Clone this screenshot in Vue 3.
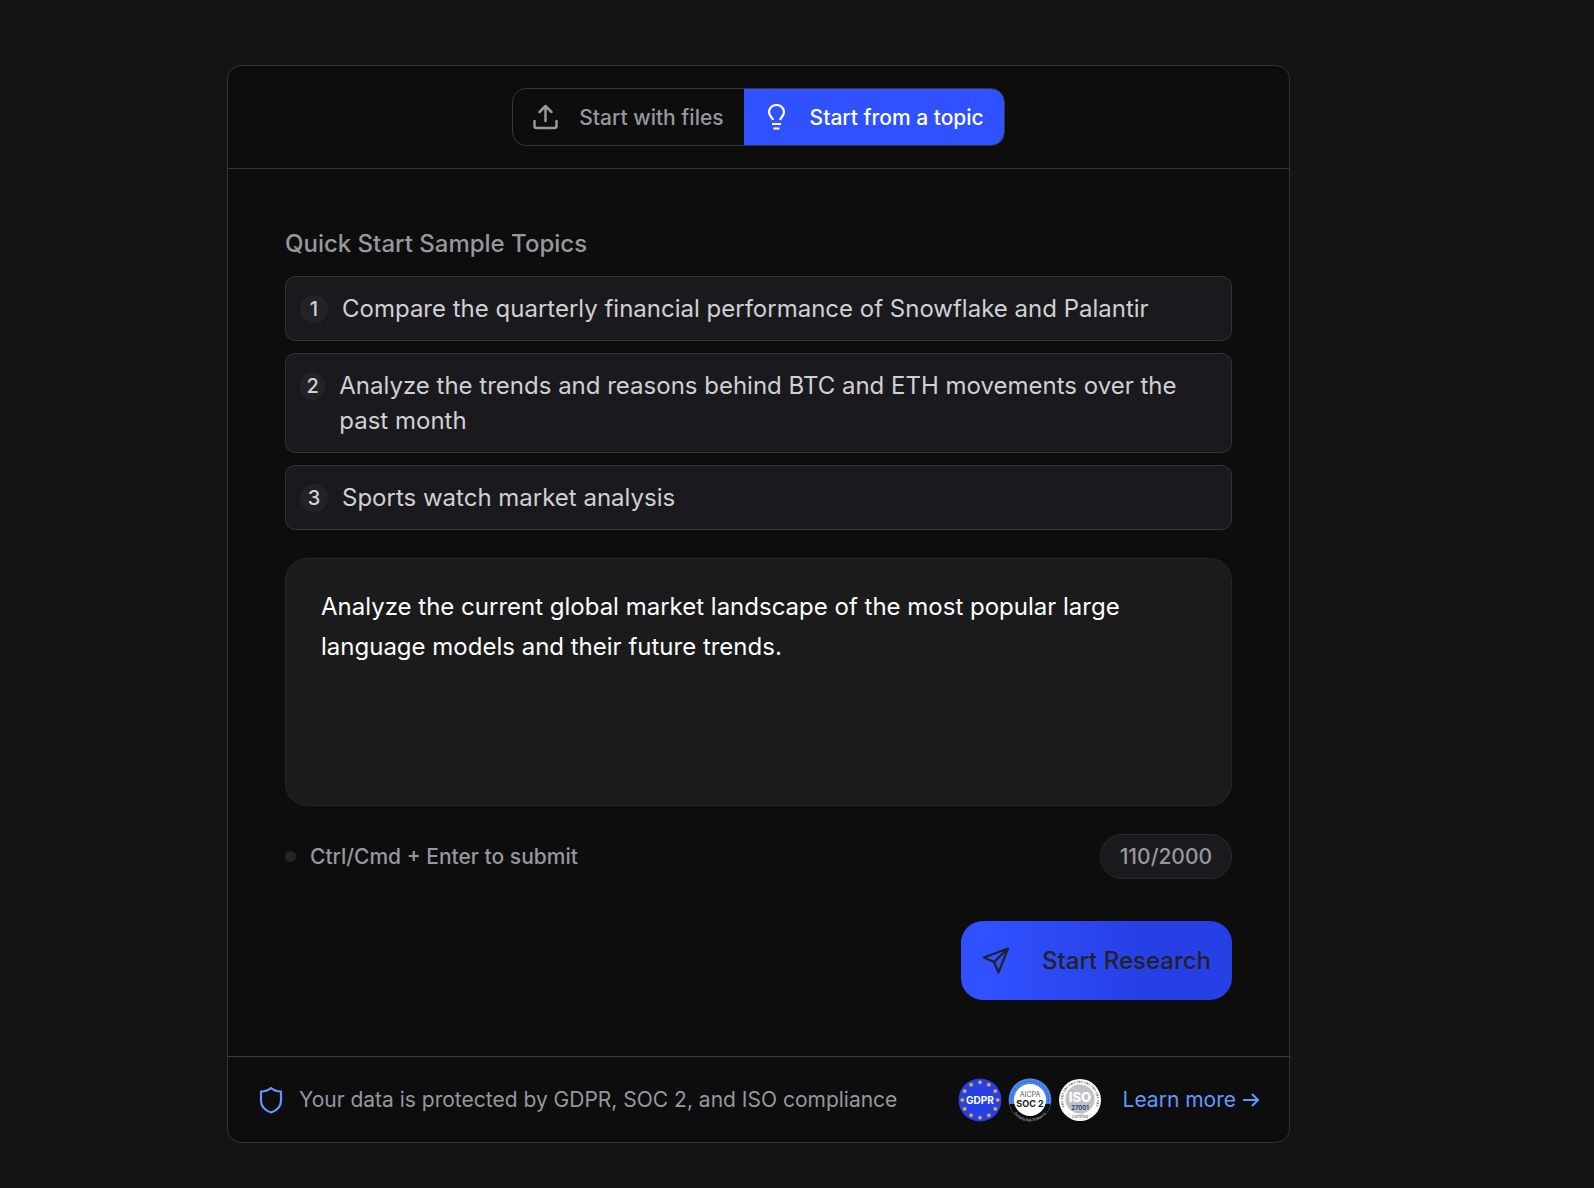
<template>
  <main class="page">
    <form class="card" @submit.prevent="submit">
      <header class="card-header">
        <div class="tabs">
          <button
            type="button"
            class="tab"
            :class="{ active: mode === 'files' }"
            @click="mode = 'files'"
          >
            <svg class="tab-icon" viewBox="0 0 26 26" fill="none" stroke="currentColor" stroke-width="2.5" stroke-linecap="round" stroke-linejoin="round">
              <path d="M12.500 17V2M6.500 8l6-6 6 6M1.500 17v5q0 2 2 2h18q2 0 2-2v-5" />
            </svg>
            <span>Start with files</span>
          </button>
          <button
            type="button"
            class="tab"
            :class="{ active: mode === 'topic' }"
            @click="mode = 'topic'"
          >
            <svg class="tab-icon" viewBox="0 0 26 26" fill="none" stroke="currentColor" stroke-width="2.2">
              <path d="M9 16c-.5-2.500-4-4-4-8a7.500 7 0 0 1 15 0c0 4-3.500 5.500-4 8" />
              <path d="M8 20h9M9.500 24.500h6" />
            </svg>
            <span>Start from a topic</span>
          </button>
        </div>
      </header>

      <section class="card-body">
        <h2 class="section-title">Quick Start Sample Topics</h2>
        <div class="topics">
          <button
            v-for="(item, index) in samples"
            :key="index"
            type="button"
            class="topic"
            @click="topic = item"
          >
            <span class="topic-number">{{ index + 1 }}</span>
            <span class="topic-text">{{ item }}</span>
          </button>
        </div>

        <textarea
          v-model="topic"
          class="topic-input"
          aria-label="Research topic"
          :maxlength="maxLength"
          @keydown.ctrl.enter="submit"
          @keydown.meta.enter="submit"
        ></textarea>

        <div class="input-info">
          <span class="hint"><i class="dot"></i>Ctrl/Cmd + Enter to submit</span>
          <span class="counter">{{ topic.length }}/{{ maxLength }}</span>
        </div>

        <div class="actions">
          <button type="submit" class="submit">
            <svg class="submit-icon" viewBox="0 0 28 28" fill="none" stroke="currentColor" stroke-width="2.2" stroke-linejoin="round">
              <path d="M26 1.500 2 10.500l10 4.500 4.500 10.500zM12 15 26 1.500" />
            </svg>
            <span>Start Research</span>
          </button>
        </div>
      </section>

      <footer class="card-footer">
        <svg class="shield" viewBox="0 0 24 28" fill="none" stroke="currentColor" stroke-width="2.2" stroke-linejoin="round">
          <path d="M12 2c2.500 2.300 6 3.300 10 3.500v9c0 6-4 10-10 12-6-2-10-6-10-12v-9c4-.2 7.500-1.200 10-3.500z" />
        </svg>
        <span class="notice">Your data is protected by GDPR, SOC 2, and ISO compliance</span>
        <div class="badges">
          <svg class="badge" viewBox="0 0 44 44">
            <circle cx="22" cy="22" r="21.500" fill="#2740e6" />
            <path
              v-for="n in 12"
              :key="n"
              d="M22 2.200l.6 1.300 1.400.1-1.100 1 .4 1.400-1.300-.8-1.300.8.4-1.400-1.100-1 1.400-.1z"
              fill="#f5c12f"
              stroke="#f5c12f"
              stroke-width=".4"
              :transform="`rotate(${n * 30} 22 22)`"
            />
            <text x="22" y="25.500" text-anchor="middle" font-size="10" font-weight="700" fill="#fff">GDPR</text>
          </svg>
          <svg class="badge" viewBox="0 0 44 44">
            <circle cx="22" cy="22" r="21" fill="#0b0b0d" stroke="#55585f" />
            <path d="M1.500 26a21 21 0 1 1 41 0z" fill="#4a86ee" />
            <circle cx="22" cy="22" r="18.500" fill="none" stroke="#17408f" stroke-width="1" stroke-dasharray="1 2" />
            <path d="M2 27h40a20.500 20.500 0 0 1-40 0z" fill="#0b0b0d" />
            <circle cx="22" cy="22" r="16" fill="#fff" />
            <path id="soc-arc" d="M2 23a20 20 0 0 0 40 0" fill="none" />
            <text font-size="3" fill="#ddd">
              <textPath href="#soc-arc" startOffset="50%" text-anchor="middle">Formerly SAS 70 Reports</textPath>
            </text>
            <text x="22" y="18.500" text-anchor="middle" font-size="7" fill="#555a60">AICPA</text>
            <text x="22" y="29" text-anchor="middle" font-size="9" font-weight="700" fill="#17191d">SOC 2</text>
          </svg>
          <svg class="badge" viewBox="0 0 44 44">
            <circle cx="22" cy="22" r="21" fill="#fafafa" />
            <!-- outer ring of micro lettering -->
            <path d="M5.500 29a18 18 0 1 1 33 0" fill="none" stroke="#8b8d90" stroke-width="2" stroke-dasharray="1 1 2 1 1 2" />
            <circle cx="22" cy="21" r="14.500" fill="#bfc1c4" />
            <text x="22" y="24" text-anchor="middle" font-size="13" font-weight="800" fill="#fff">ISO</text>
            <text x="22" y="32" text-anchor="middle" font-size="6" font-weight="600" fill="#27346f">27001</text>
            <text x="22" y="40" text-anchor="middle" font-size="4" fill="#555">Certified</text>
          </svg>
        </div>
        <a class="learn-more" href="#">
          Learn more
          <svg class="arrow" viewBox="0 0 18 18" fill="none" stroke="currentColor" stroke-width="2">
            <path d="M1 9h15M10 3l6 6-6 6" />
          </svg>
        </a>
      </footer>
    </form>
  </main>
</template>

<script setup>
import { ref } from "vue";

const maxLength = 2000;
const mode = ref("topic");
const topic = ref(
  "Analyze the current global market landscape of the most popular large language models and their future trends."
);

const samples = [
  "Compare the quarterly financial performance of Snowflake and Palantir",
  "Analyze the trends and reasons behind BTC and ETH movements over the past month",
  "Sports watch market analysis",
];

const emit = defineEmits(["submit"]);

const submit = () => {
  emit("submit", topic.value);
};
</script>

<style>
body {
  margin: 0;
  background-color: #141414;
}
</style>

<style scoped>
* {
  box-sizing: border-box;
}

.page {
  padding: 65px 304px 44px 227px;
  font-family: Inter, "Liberation Sans", sans-serif;
  color: #d0d0d2;
}

button,
textarea {
  font-family: inherit;
  color: inherit;
  cursor: pointer;
}

.card {
  border: 1px solid #333336;
  border-radius: 14px;
  background-color: #0d0d0d;
  overflow: hidden;
}

.card-header {
  display: flex;
  justify-content: center;
  padding: 22px;
  border-bottom: 1px solid #333336;
}

.tabs {
  display: flex;
  border: 1px solid #38383d;
  border-radius: 14px;
  overflow: hidden;
}

.tab {
  display: flex;
  align-items: center;
  gap: 20px;
  height: 56px;
  padding: 0 20px;
  border: 0;
  background: transparent;
  font-size: 21px;
  font-weight: 500;
  color: #97979d;
}

.tab.active {
  background-color: #2f51ff;
  color: #ffffff;
}

.tab-icon {
  width: 26px;
  height: 26px;
}

.card-body {
  padding: 57px 57px 56px;
}

.section-title {
  margin: 0 0 14px;
  font-size: 24px;
  line-height: 36px;
  font-weight: 500;
  color: #97979d;
}

.topics {
  display: flex;
  flex-direction: column;
  gap: 12px;
}

.topic {
  display: flex;
  align-items: flex-start;
  gap: 14px;
  padding: 14px;
  border: 1px solid #333338;
  border-radius: 10px;
  background-color: #1a1a1e;
  font-size: 24px;
  line-height: 35px;
  text-align: left;
}

.topic-number {
  width: 28px;
  margin-top: 4px;
  border-radius: 50%;
  background-color: #232325;
  font-size: 20px;
  line-height: 28px;
  font-weight: 500;
  text-align: center;
}

.topic-input {
  display: block;
  width: 100%;
  height: 248px;
  margin-top: 28px;
  padding: 28px 35px;
  border: 1px solid #262628;
  border-radius: 22px;
  outline: none;
  resize: none;
  background-color: #1b1b1b;
  color: #ffffff;
  font-size: 24px;
  line-height: 40px;
  cursor: text;
}

.input-info {
  display: flex;
  align-items: center;
  justify-content: space-between;
  margin-top: 28px;
  font-size: 21px;
  font-weight: 500;
  color: #97979d;
}

.hint {
  display: flex;
  align-items: center;
  gap: 14px;
}

.dot {
  width: 11px;
  height: 11px;
  border-radius: 50%;
  background-color: #252527;
}

.counter {
  padding: 0 19px;
  border: 1px solid #2a2a2e;
  border-radius: 22px;
  background-color: #1a1a1e;
  line-height: 43px;
}

.actions {
  display: flex;
  justify-content: flex-end;
  margin-top: 42px;
}

.submit {
  display: flex;
  align-items: center;
  gap: 32px;
  height: 79px;
  padding: 0 21px;
  border: 0;
  border-radius: 22px;
  background: linear-gradient(90deg, #2f51ff 10%, #2740e6 65%);
  color: #222226;
  font-size: 24px;
  font-weight: 500;
}

.submit-icon {
  width: 28px;
  height: 28px;
}

.card-footer {
  display: flex;
  align-items: center;
  height: 86px;
  padding: 0 29px 0 31px;
  border-top: 1px solid #3d3d41;
  font-size: 21px;
  color: #97979d;
}

.shield {
  width: 24px;
  height: 28px;
  margin-right: 16px;
  color: #6596ff;
}

.badges {
  display: flex;
  gap: 6px;
  margin-left: auto;
}

.badge {
  width: 44px;
  height: 44px;
}

.learn-more {
  display: flex;
  align-items: center;
  gap: 6px;
  margin-left: 21px;
  color: #6596ff;
  text-decoration: none;
}

.arrow {
  width: 18px;
  height: 18px;
}
</style>
